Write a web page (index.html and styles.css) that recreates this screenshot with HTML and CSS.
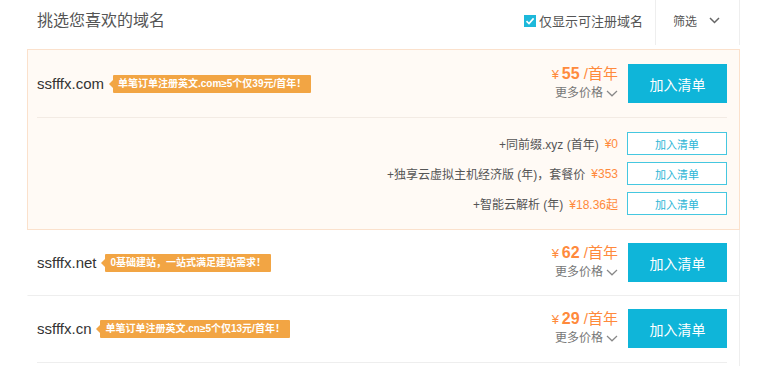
FILE: index.html
```html
<!DOCTYPE html>
<html lang="zh-CN">

<head>
    <meta charset="UTF-8">
    <meta name="viewport" content="width=device-width, initial-scale=1.0">
    <title>挑选您喜欢的域名</title>
    <link rel="stylesheet" href="styles.css">
</head>

<body>
    <div class="panel">
        <!-- 顶部：标题 + 只看可注册 + 筛选 -->
        <div class="head">
            <div class="head-title">挑选您喜欢的域名</div>
            <label class="only-free">
                <span class="check">
                    <svg width="12" height="12" viewBox="0 0 12 12"><path d="M2.5 6.2 L5 8.6 L9.6 3.4" fill="none" stroke="#fff" stroke-width="1.6"/></svg>
                </span>
                仅显示可注册域名
            </label>
            <div class="filter">
                筛选
                <svg width="11" height="7" viewBox="0 0 11 7"><path d="M1 1 L5.5 5.5 L10 1" fill="none" stroke="#666" stroke-width="1.5"/></svg>
            </div>
        </div>

        <!-- 第1行：已展开 -->
        <div class="item open">
            <div class="item-main">
                <div class="domain">ssfffx.com</div>
                <span class="tag">单笔订单注册英文.com≥5个仅39元/首年！</span>
                <div class="price-box">
                    <div class="price"><span class="yen">¥</span><span class="num">55</span> /首年</div>
                    <div class="more">更多价格
                        <svg width="12" height="7" viewBox="0 0 12 7"><path d="M1 1 L6 5.8 L11 1" fill="none" stroke="#888" stroke-width="1.2"/></svg>
                    </div>
                </div>
                <button class="btn-add">加入清单</button>
            </div>
            <!-- 搭配购买 -->
            <div class="extras">
                <div class="extra">
                    <span>+同前缀.xyz (首年)</span><em>¥0</em>
                    <button class="btn-small">加入清单</button>
                </div>
                <div class="extra">
                    <span>+独享云虚拟主机经济版 (年)，套餐价</span><em>¥353</em>
                    <button class="btn-small">加入清单</button>
                </div>
                <div class="extra">
                    <span>+智能云解析 (年)</span><em>¥18.36起</em>
                    <button class="btn-small">加入清单</button>
                </div>
            </div>
        </div>

        <!-- 第2行 -->
        <div class="item">
            <div class="item-main">
                <div class="domain">ssfffx.net</div>
                <span class="tag">0基础建站，一站式满足建站需求！</span>
                <div class="price-box">
                    <div class="price"><span class="yen">¥</span><span class="num">62</span> /首年</div>
                    <div class="more">更多价格
                        <svg width="12" height="7" viewBox="0 0 12 7"><path d="M1 1 L6 5.8 L11 1" fill="none" stroke="#888" stroke-width="1.2"/></svg>
                    </div>
                </div>
                <button class="btn-add">加入清单</button>
            </div>
        </div>

        <!-- 第3行 -->
        <div class="item last">
            <div class="item-main">
                <div class="domain">ssfffx.cn</div>
                <span class="tag">单笔订单注册英文.cn≥5个仅13元/首年！</span>
                <div class="price-box">
                    <div class="price"><span class="yen">¥</span><span class="num">29</span> /首年</div>
                    <div class="more">更多价格
                        <svg width="12" height="7" viewBox="0 0 12 7"><path d="M1 1 L6 5.8 L11 1" fill="none" stroke="#888" stroke-width="1.2"/></svg>
                    </div>
                </div>
                <button class="btn-add">加入清单</button>
            </div>
        </div>
        <div class="tail"></div>
    </div>
</body>

</html>
```

FILE: styles.css
```css
/* 域名列表 */
body {
    margin: 0;
    background: #fff;
    font-family: "Liberation Sans", "Noto Sans CJK SC", sans-serif;
}

.panel {
    margin-left: 27px;
    width: 713px;
}

/* 顶部 */
.head {
    display: flex;
    height: 49px;
}

.head-title {
    flex: 1;
    padding-left: 10px;
    font-size: 16px;
    color: #555;
    line-height: 41px;
}

.only-free {
    display: flex;
    align-items: center;
    height: 41px;
    margin-right: 12px;
    font-size: 13px;
    color: #555;
}

.check {
    display: block;
    width: 12px;
    height: 12px;
    margin-right: 3px;
    background: #1db8da;
}

.check svg {
    display: block;
}

.filter {
    box-sizing: border-box;
    width: 85px;
    height: 45px;
    padding: 0 0 4px 17px;
    border-left: 1px solid #eee;
    border-right: 1px solid #eee;
    display: flex;
    align-items: center;
    gap: 12px;
    font-size: 12px;
    color: #555;
}

/* 每一行 */
.item {
    border: 1px solid transparent;
    border-top: 0;
    border-right-color: #eee;
    border-bottom-color: #eee;
}

.item.open {
    background: #fffaf5;
    border: 1px solid #fbe1cc;
}

.item.last {
    border-bottom: 0;
}

.item-main {
    display: flex;
    align-items: center;
    margin: 0 12px 0 9px;
    padding: 13px 0;
}

.item.open .item-main {
    padding: 14px 0;
    border-bottom: 1px solid #f3ebe4;
}

.item.last .item-main {
    padding-bottom: 14px;
    border-bottom: 1px solid #eee;
}

.domain {
    font-size: 15px;
    color: #333;
}

.tag {
    position: relative;
    margin-left: 9px;
    padding: 0 5px;
    height: 18px;
    line-height: 18px;
    background: #f2a544;
    color: #fff;
    font-size: 10px;
    font-weight: bold;
    border-radius: 1px;
}

/* 标签左侧的小三角 */
.tag::before {
    content: "";
    position: absolute;
    left: -4px;
    top: 5px;
    border-top: 4px solid transparent;
    border-bottom: 4px solid transparent;
    border-right: 4px solid #f2a544;
}

.price-box {
    margin-left: auto;
    margin-right: 10px;
    text-align: right;
}

.price {
    color: #ff8a3c;
    font-size: 15px;
    line-height: 19px;
}

.price .yen {
    font-size: 13px;
    margin-right: 3px;
}

.price .num {
    font-size: 16px;
    font-weight: bold;
}

.more {
    display: flex;
    justify-content: flex-end;
    align-items: center;
    gap: 3px;
    font-size: 12px;
    line-height: 19px;
    color: #777;
}

.btn-add {
    width: 99px;
    height: 39px;
    border: 0;
    padding: 0;
    background: #0fb5d9;
    color: #fff;
    font-family: inherit;
    font-size: 14px;
}

/* 搭配购买 */
.extras {
    margin: 0 12px 0 9px;
    padding: 14px 0;
    display: flex;
    flex-direction: column;
    gap: 7px;
}

.extra {
    display: flex;
    justify-content: flex-end;
    align-items: center;
    font-size: 12px;
    color: #555;
}

.extra em {
    font-style: normal;
    color: #ff8a3c;
    margin-left: 6px;
}

.btn-small {
    box-sizing: border-box;
    width: 100px;
    height: 23px;
    margin-left: 9px;
    padding: 0;
    border: 1px solid #45c7e0;
    background: #fff;
    color: #2bb5d6;
    font-family: inherit;
    font-size: 11px;
}

.tail {
    height: 3px;
    border-right: 1px solid #eee;
}
```
